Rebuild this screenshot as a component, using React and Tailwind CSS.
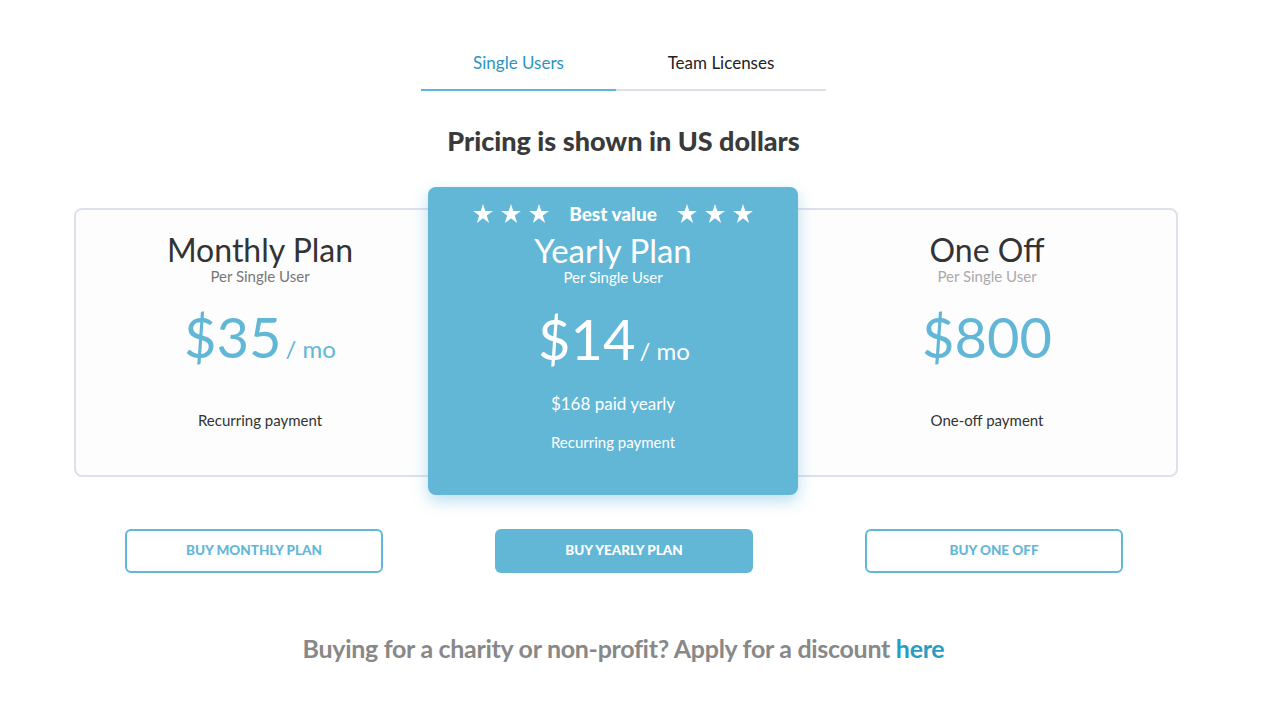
import { useState } from 'react'

const sans = "font-['Lato','Noto_Sans',sans-serif]"

function Star() {
  return (
    <svg width="20" height="19" viewBox="0 0 24 23" fill="currentColor">
      <polygon points="12,0 14.8,8.6 24,8.6 16.6,14 19.4,23 12,17.4 4.6,23 7.4,14 0,8.6 9.2,8.6" />
    </svg>
  )
}

function Stars() {
  return (
    <div className="flex gap-[8px]">
      <Star />
      <Star />
      <Star />
    </div>
  )
}

export default function App() {
  const [tab, setTab] = useState('single')

  return (
    <div className={`w-[1247px] h-[722px] bg-white ${sans} flex flex-col items-center`}>
      {/* tabs */}
      <div className="mt-[50px] flex w-[405px]">
        <button
          onClick={() => setTab('single')}
          className={`w-[195px] pb-[13px] text-[17px] border-b-2 ${tab === 'single' ? 'text-[#2c95c0] border-[#5fb6d6]' : 'text-[#222] border-[#dde0e6]'}`}
        >
          Single Users
        </button>
        <button
          onClick={() => setTab('team')}
          className={`w-[210px] pb-[13px] text-[17px] border-b-2 ${tab === 'team' ? 'text-[#2c95c0] border-[#5fb6d6]' : 'text-[#222] border-[#dde0e6]'}`}
        >
          Team Licenses
        </button>
      </div>

      <h1 className="mt-[36px] text-[27px] font-black text-[#3a3a3a] leading-none">Pricing is shown in US dollars</h1>

      {/* plans */}
      <div className="mt-[33px] w-[1104px] ml-[5px] flex">
        <div className="mt-[21px] h-[269px] flex-1 flex border-2 border-[#dde1ea] rounded-[8px] bg-[#fdfdfe]">
          <div className="w-[352px] pl-[16px] flex flex-col items-center">
            <div className="mt-[22px] text-[32px] leading-[36px] text-[#333]">Monthly Plan</div>
            <div className="text-[15px] leading-[16px] text-[#777]">Per Single User</div>
            <div className="mt-[21px] flex items-baseline text-[#62b7d7]">
              <span className="text-[56px] leading-[64px]">$35</span>
              <span className="ml-[4px] text-[24px]">/ mo</span>
            </div>
            <div className="mt-[40px] text-[15px] text-[#333]">Recurring payment</div>
          </div>

          <div className="mt-[-23px] mb-[-20px] w-[370px] shrink-0 bg-[#62b7d7] rounded-[8px] shadow-[0_6px_16px_rgba(98,183,215,0.45)] text-white flex flex-col items-center">
            <div className="mt-[17px] flex items-center">
              <Stars />
              <span className="mx-[20px] text-[19px] font-black leading-none">Best value</span>
              <Stars />
            </div>
            <div className="mt-[8px] text-[33px] leading-[38px]">Yearly Plan</div>
            <div className="text-[15px] leading-[16px]">Per Single User</div>
            <div className="mt-[22px] flex items-baseline ml-[2px]">
              <span className="text-[56px] leading-[64px]">$14</span>
              <span className="ml-[4px] text-[24px]">/ mo</span>
            </div>
            <div className="mt-[21px] text-[17px] leading-[24px]">$168 paid yearly</div>
            <div className="mt-[16px] text-[15px] leading-[20px]">Recurring payment</div>
          </div>

          <div className="flex-1 flex flex-col items-center">
            <div className="mt-[22px] text-[32px] leading-[36px] text-[#333]">One Off</div>
            <div className="text-[15px] leading-[16px] text-[#aaa]">Per Single User</div>
            <div className="mt-[21px] text-[#62b7d7]">
              <span className="text-[56px] leading-[64px]">$800</span>
            </div>
            <div className="mt-[40px] text-[15px] text-[#333]">One-off payment</div>
          </div>
        </div>
      </div>

      {/* buttons */}
      <div className="mt-[52px] w-[1104px] ml-[5px] pl-[51px] flex gap-[112px]">
        <button className="w-[258px] h-[44px] rounded-[6px] border-2 border-[#62b7d7] text-[#62b7d7] text-[13.5px] font-black">BUY MONTHLY PLAN</button>
        <button className="w-[258px] h-[44px] rounded-[6px] bg-[#62b7d7] text-white text-[13.5px] font-black">BUY YEARLY PLAN</button>
        <button className="w-[258px] h-[44px] rounded-[6px] border-2 border-[#62b7d7] text-[#62b7d7] text-[13.5px] font-black">BUY ONE OFF</button>
      </div>

      <p className="mt-[57px] text-[25px] font-bold text-[#888] tracking-[-0.3px]">
        Buying for a charity or non-profit? Apply for a discount <a className="text-[#2a9cc4]">here</a>
      </p>
    </div>
  )
}
